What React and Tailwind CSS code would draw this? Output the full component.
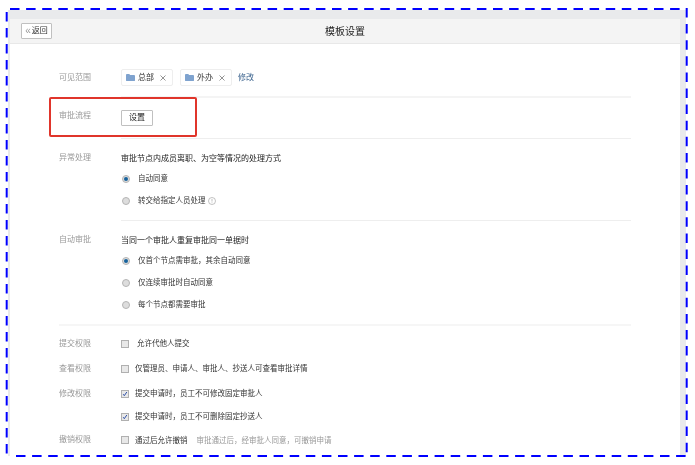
import React from "react";

const FONT = "font-['Liberation_Sans','Noto_Sans_CJK_SC',sans-serif]";

const FolderIcon = () => (
  <svg width="9" height="7" viewBox="0 0 10 8" preserveAspectRatio="none" className="shrink-0">
    <path d="M0 1a1 1 0 0 1 1-1h2.6l1 1.2H9a1 1 0 0 1 1 1V7a1 1 0 0 1-1 1H1a1 1 0 0 1-1-1z" fill="#7fa3cf" />
  </svg>
);

const Tag = ({ name, className = "" }) => (
  <div className={`flex h-[17px] w-[52px] items-center rounded-[2px] border border-[#eeeeee] bg-white pl-[4px] ${className}`}>
    <FolderIcon />
    <span className="ml-[3px] text-[8px] text-[#333333]">{name}</span>
    <svg width="6" height="6" viewBox="0 0 6 6" className="ml-[6px]">
      <path d="M0.5 0.5l5 5M5.5 0.5l-5 5" stroke="#888888" strokeWidth="0.9" />
    </svg>
  </div>
);

const Radio = ({ checked }) => (
  <span className="flex h-[8px] w-[8px] shrink-0 items-center justify-center rounded-full border border-[#b5b5b5] bg-[#dddddd]">
    {checked && <span className="h-[4px] w-[4px] rounded-full bg-[#17629c]" />}
  </span>
);

const RadioRow = ({ checked, children }) => (
  <div className="flex h-[22px] items-center pl-[1px]">
    <Radio checked={checked} />
    <span className="ml-[8px] text-[7.5px] text-[#333333]">{children}</span>
  </div>
);

const Check = ({ checked }) => (
  <span className="flex h-[8px] w-[8px] shrink-0 items-center justify-center border border-[#b0b0b0] bg-[#e8e8e8]">
    {checked && (
      <svg width="6" height="6" viewBox="0 0 6 6">
        <path d="M1.2 3.2l1.1 1.5L4.8 1" fill="none" stroke="#2f50a8" strokeWidth="1" />
      </svg>
    )}
  </span>
);

const PermRow = ({ label, checked, gap = "ml-[6px]", hint, className = "", children }) => (
  <div className={`flex items-center ${className}`}>
    <span className="w-[62px] text-[8px] text-[#999999]">{label}</span>
    <Check checked={checked} />
    <span className={`${gap} text-[7.5px] text-[#333333]`}>{children}</span>
    {hint && <span className="ml-[9px] text-[7.5px] text-[#999999]">{hint}</span>}
  </div>
);

export default function App() {
  return (
    <div className={`h-[465px] w-[695px] overflow-hidden bg-white ${FONT}`}>
      <div className="relative ml-[8px] mt-[10px] h-[446px] w-[678px] bg-[#e9eaec] pl-[2px] pr-[6px] pt-[9px]">
        <div className="h-[437px] overflow-hidden bg-white blur-[0.35px]">
          {/* top bar */}
          <div className="relative flex h-[25px] items-center justify-center border-b border-[#e8e8e8] bg-[#f4f4f4]">
            <button className="absolute left-[11px] top-[4px] flex h-[16px] w-[31px] items-center justify-center gap-[1px] rounded-[1px] border border-[#c0c0c0] bg-white text-[8px] text-[#333333]">
              <span className="text-[10px] leading-[10px] text-[#999999]">«</span>返回
            </button>
            <span className="text-[10px] text-[#222222]">模板设置</span>
          </div>

          <div className="w-[621px] pl-[49px]">
            {/* scope */}
            <div className="flex h-[52px] items-start pt-[25px]">
              <span className="w-[62px] text-[8px] leading-[17px] text-[#999999]">可见范围</span>
              <Tag name="总部" />
              <Tag name="外办" className="ml-[7px]" />
              <span className="ml-[6px] text-[8px] leading-[17px] text-[#3f6690]">修改</span>
            </div>

            {/* flow */}
            <div className="ml-[62px] h-[2px] bg-[#f4f4f4]" />
            <div className="flex h-[40px] pt-[12px]">
              <span className="w-[62px] text-[8px] leading-[12px] text-[#999999]">审批流程</span>
              <button className="h-[16px] w-[32px] rounded-[1px] border border-[#c0c0c0] bg-white text-[8px] text-[#222222]">设置</button>
            </div>
            <div className="ml-[62px] h-px bg-[#eeeeee]" />

            {/* exception handling */}
            <div className="flex h-[81px] pt-[9px]">
              <span className="w-[62px] text-[8px] leading-[20px] text-[#999999]">异常处理</span>
              <div>
                <div className="h-[20px] text-[8px] leading-[21px] text-[#222222]">审批节点内成员离职、为空等情况的处理方式</div>
                <RadioRow checked>自动同意</RadioRow>
                <div className="flex items-center">
                  <RadioRow>转交给指定人员处理</RadioRow>
                  <svg width="8" height="8" viewBox="0 0 8 8" className="ml-[2px]">
                    <circle cx="4" cy="4" r="3.5" fill="none" stroke="#999999" strokeWidth="0.6" />
                    <path d="M4 2v2.6M4 5.4v.7" stroke="#999999" strokeWidth="0.6" />
                  </svg>
                </div>
              </div>
            </div>
            <div className="ml-[62px] h-px bg-[#eeeeee]" />

            {/* auto approve */}
            <div className="flex h-[103px] pt-[9px]">
              <span className="w-[62px] text-[8px] leading-[20px] text-[#999999]">自动审批</span>
              <div>
                <div className="h-[20px] text-[8px] leading-[21px] text-[#222222]">当同一个审批人重复审批同一单据时</div>
                <RadioRow checked>仅首个节点需审批，其余自动同意</RadioRow>
                <RadioRow>仅连续审批时自动同意</RadioRow>
                <RadioRow>每个节点都需要审批</RadioRow>
              </div>
            </div>
            <div className="h-[2px] bg-[#f6f6f6]" />

            {/* permissions */}
            <PermRow label="提交权限" gap="ml-[8px]" className="mt-[12px]">允许代他人提交</PermRow>
            <PermRow label="查看权限" className="mt-[13px]">仅管理员、申请人、审批人、抄送人可查看审批详情</PermRow>
            <PermRow label="修改权限" checked className="mt-[13px]">提交申请时，员工不可修改固定审批人</PermRow>
            <PermRow label="" checked className="mt-[11px]">提交申请时，员工不可删除固定抄送人</PermRow>
            <PermRow label="撤销权限" className="mt-[12px]" hint="审批通过后，经审批人同意，可撤销申请">通过后允许撤销</PermRow>
          </div>
        </div>

        {/* red highlight annotation */}
        <div className="absolute left-[41px] top-[87px] h-[40px] w-[148px] rounded-[2px] border-2 border-[#e0352b]" />
      </div>

      {/* blue dashed frame annotation */}
      <svg width="695" height="465" className="pointer-events-none absolute left-0 top-0">
        <g fill="none" stroke="#0000ff" strokeWidth="2" strokeDasharray="9.5 6.6">
          <path d="M10 9H684" />
          <path d="M686.7 8V456" />
          <path d="M16 456H686" />
          <path d="M6.7 12V456" strokeDasharray="9.5 6.5" />
        </g>
      </svg>
    </div>
  );
}
